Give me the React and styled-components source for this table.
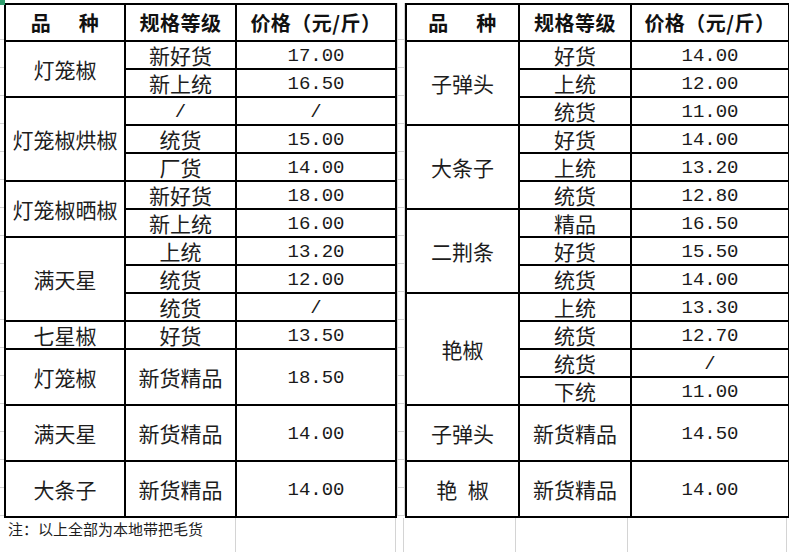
import React from 'react'
import styled, { createGlobalStyle } from 'styled-components'

const GlobalStyle = createGlobalStyle`
  html, body {
    margin: 0;
    padding: 0;
    background: #fff;
  }
  body {
    font-family: "Noto Sans CJK SC", "Noto Sans", sans-serif;
    color: #1d1d1d;
  }
`

const leftData = [
  { name: '灯笼椒', rows: [['新好货', '17.00'], ['新上统', '16.50']] },
  { name: '灯笼椒烘椒', rows: [['/', '/'], ['统货', '15.00'], ['厂货', '14.00']] },
  { name: '灯笼椒晒椒', rows: [['新好货', '18.00'], ['新上统', '16.00']] },
  { name: '满天星', rows: [['上统', '13.20'], ['统货', '12.00'], ['统货', '/']] },
  { name: '七星椒', rows: [['好货', '13.50']] },
  { name: '灯笼椒', rows: [['新货精品', '18.50']], tall: true },
  { name: '满天星', rows: [['新货精品', '14.00']], tall: true },
  { name: '大条子', rows: [['新货精品', '14.00']], tall: true },
]

const rightData = [
  { name: '子弹头', rows: [['好货', '14.00'], ['上统', '12.00'], ['统货', '11.00']] },
  { name: '大条子', rows: [['好货', '14.00'], ['上统', '13.20'], ['统货', '12.80']] },
  { name: '二荆条', rows: [['精品', '16.50'], ['好货', '15.50'], ['统货', '14.00']] },
  { name: '艳椒', rows: [['上统', '13.30'], ['统货', '12.70'], ['统货', '/'], ['下统', '11.00']] },
  { name: '子弹头', rows: [['新货精品', '14.50']], tall: true },
  { name: '艳\u2002椒', rows: [['新货精品', '14.00']], tall: true },
]

const Sheet = styled.div`
  position: relative;
  width: 789px;
  height: 552px;
  overflow: hidden;
  display: flex;
  flex-direction: column;
  padding-top: 3px;
  box-sizing: border-box;
`

const Corner = styled.div`
  position: absolute;
  left: 0;
  top: 0;
  width: 5px;
  height: 5px;
  background: #2f9d6d;
`

const TablesRow = styled.div`
  display: flex;
  align-items: flex-start;
`

// spreadsheet gridlines visible between and beside the two tables
const Stub = styled.div`
  width: ${p => p.$w}px;
  height: 513px;
  flex: none;
  box-sizing: border-box;
  border-left: ${p => (p.$lineLeft ? '1px solid #d4d4d4' : 'none')};
  border-right: ${p => (p.$lineRight ? '1px solid #d4d4d4' : 'none')};
  position: relative;
  &::before {
    content: '';
    position: absolute;
    left: 0;
    right: 0;
    top: 36px;
    height: 1px;
    background: #d4d4d4;
  }
  &::after {
    content: '';
    position: absolute;
    left: 0;
    right: 0;
    top: 37px;
    bottom: 0;
    background: repeating-linear-gradient(
      to bottom,
      transparent 0px,
      transparent 27px,
      #d4d4d4 27px,
      #d4d4d4 28px
    );
  }
`

const Table = styled.table`
  border-collapse: collapse;
  table-layout: fixed;
  width: ${p => p.$w}px;
  flex: none;
  border: 2px solid #000;
`

const Row = styled.tr`
  height: ${p => p.$h}px;
`

const Cell = styled.td`
  border: 2px solid #000;
  padding: 0;
  text-align: center;
  vertical-align: middle;
  font-size: 21px;
  line-height: 1;
  white-space: nowrap;
`

const HeadCell = styled(Cell)`
  font-weight: 700;
  font-size: 20px;
  letter-spacing: 0.5px;
  color: #111;
`

const NumCell = styled(Cell)`
  font-family: "Liberation Mono", "DejaVu Sans Mono", monospace;
  font-size: 19px;
  padding-top: 2px;
  color: #1a1a1a;
`

const NoteRow = styled.div`
  display: flex;
  height: 36px;
  position: relative;
`

const GridCol = styled.div`
  width: ${p => p.$w}px;
  flex: none;
  box-sizing: border-box;
  border-right: ${p => (p.$line ? '1px solid #d4d4d4' : 'none')};
`

const Note = styled.div`
  position: absolute;
  left: 8px;
  top: 1px;
  font-size: 15px;
  line-height: 20px;
  white-space: nowrap;
  color: #1d1d1d;
  background: #fff;
  padding-right: 2px;
`

function PriceTable({ data, widths, headName }) {
  const total = widths.reduce((a, b) => a + b, 0)
  return (
    <Table $w={total}>
      <colgroup>
        {widths.map((w, i) => (
          <col key={i} style={{ width: w }} />
        ))}
      </colgroup>
      <tbody>
        <Row $h={37}>
          <HeadCell>{headName}</HeadCell>
          <HeadCell>规格等级</HeadCell>
          <HeadCell>价格（元/斤）</HeadCell>
        </Row>
        {data.map((group, gi) =>
          group.rows.map((r, ri) => (
            <Row key={gi + '-' + ri} $h={group.tall ? 56 : 28}>
              {ri === 0 && <Cell rowSpan={group.rows.length}>{group.name}</Cell>}
              {r[0] === '/' ? <NumCell>/</NumCell> : <Cell>{r[0]}</Cell>}
              <NumCell>{r[1]}</NumCell>
            </Row>
          ))
        )}
      </tbody>
    </Table>
  )
}

export default function App() {
  return (
    <>
      <GlobalStyle />
      <Sheet>
        <TablesRow>
          <Stub $w={4} />
          <PriceTable data={leftData} widths={[120, 111, 160]} headName={'品\u2003\u2004种'} />
          <Stub $w={8} $lineLeft $lineRight />
          <PriceTable data={rightData} widths={[113, 112, 158]} headName={'品\u2003\u2004种'} />
          <Stub $w={3} $lineLeft />
        </TablesRow>
        <NoteRow>
          <GridCol $w={4} />
          <GridCol $w={120} />
          <GridCol $w={112} $line />
          <GridCol $w={160} $line />
          <GridCol $w={8} $line />
          <GridCol $w={112} $line />
          <GridCol $w={112} $line />
          <GridCol $w={159} $line />
          <Note>注：以上全部为本地带把毛货</Note>
        </NoteRow>
        <Corner />
      </Sheet>
    </>
  )
}
